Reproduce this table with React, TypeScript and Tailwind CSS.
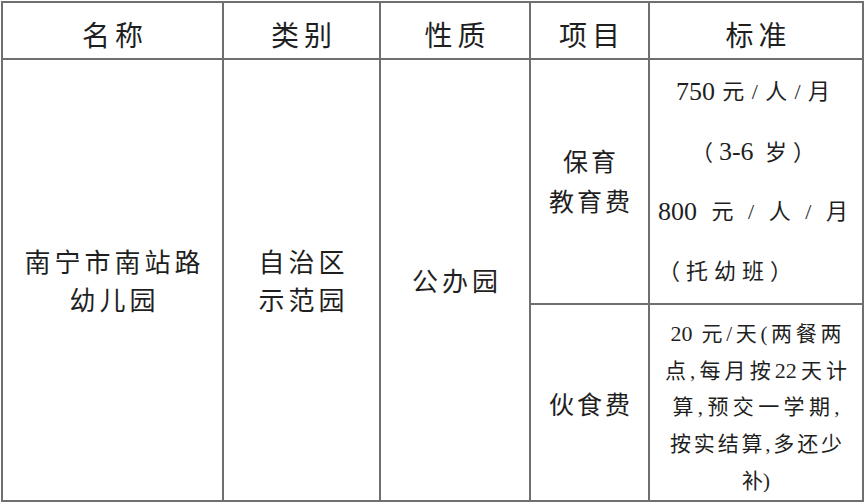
import type React from "react";

const font = "font-['Liberation_Serif','Noto_Sans_CJK_SC',serif]";
const line = "border-2 border-[#6f6f6f] p-0";

function Spread({ className, children }: { className: string; children: React.ReactNode }) {
  return <div className={`flex h-[60px] items-center justify-between ${className}`}>{children}</div>;
}

function Justify({ className, children }: { className: string; children: React.ReactNode }) {
  return (
    <div className={`mx-auto h-[37px] overflow-hidden text-justify leading-[37px] [text-align-last:justify] whitespace-nowrap ${className}`}>
      {children}
    </div>
  );
}

export default function App() {
  return (
    <div className={`min-h-screen bg-white pl-px pt-px text-[#1f1f1f] ${font}`}>
      <table className="w-[861px] table-fixed border-collapse">
        <colgroup>
          <col className="w-[221px]" />
          <col className="w-[157px]" />
          <col className="w-[150px]" />
          <col className="w-[119px]" />
          <col className="w-[214px]" />
        </colgroup>
        <thead>
          <tr className="h-[57px]">
            {["名称", "类别", "性质", "项目", "标准"].map((h) => (
              <th key={h} className={`${line} pt-[12px] pl-[5px] text-center align-middle text-[28px] font-normal leading-none tracking-[5px]`}>
                {h}
              </th>
            ))}
          </tr>
        </thead>
        <tbody>
          <tr className="h-[245px]">
            <td rowSpan={2} className={`${line} pl-[4px] pt-[5px] text-center align-middle text-[26px] leading-[38px] tracking-[4px]`}>
              <div>南宁市南站路</div>
              <div>幼儿园</div>
            </td>
            <td rowSpan={2} className={`${line} pl-[4px] pt-[5px] text-center align-middle text-[26px] leading-[38px] tracking-[4px]`}>
              <div>自治区</div>
              <div>示范园</div>
            </td>
            <td rowSpan={2} className={`${line} pl-[4px] pt-[5px] text-center align-middle text-[26px] leading-[38px] tracking-[4px]`}>
              公办园
            </td>
            <td className={`${line} pl-[3px] pt-[3px] text-center align-middle text-[25px] leading-[40px] tracking-[3px]`}>
              <div>保育</div>
              <div>教育费</div>
            </td>
            <td className={`${line} align-middle text-[22px]`}>
              <div className="flex h-[243px] flex-col justify-center overflow-hidden pl-[8px] pr-[14px] leading-[60px]">
                <Spread className="mx-auto w-[154px]">
                  <span className="text-[26px]">750</span>
                  <span>元</span>
                  <span>/</span>
                  <span>人</span>
                  <span>/</span>
                  <span>月</span>
                </Spread>
                <div className="h-[60px] pl-[6px] text-center tracking-[6px]">
                  （<span className="text-[26px] tracking-normal">3-6</span> 岁）
                </div>
                <Spread className="w-full">
                  <span className="text-[26px]">800</span>
                  <span>元</span>
                  <span>/</span>
                  <span>人</span>
                  <span>/</span>
                  <span>月</span>
                </Spread>
                <div className="h-[60px] tracking-[6px]">（托幼班）</div>
              </div>
            </td>
          </tr>
          <tr className="h-[197px]">
            <td className={`${line} pl-[3px] pt-[6px] text-center align-middle text-[25px] tracking-[3px]`}>伙食费</td>
            <td className={`${line} align-middle text-[21px]`}>
              <div className="flex h-[195px] flex-col justify-center overflow-hidden pt-[10px]">
                <Justify className="w-[171px]">
                  <span className="text-[22px]">20</span> 元/天(两餐两
                </Justify>
                <Justify className="w-[182px]">
                  点,每月按<span className="text-[22px]">22</span>天计
                </Justify>
                <Justify className="w-[167px]">算,预交一学期,</Justify>
                <Justify className="w-[172px]">按实结算,多还少</Justify>
                <div className="h-[37px] text-center leading-[37px]">补)</div>
              </div>
            </td>
          </tr>
        </tbody>
      </table>
    </div>
  );
}
